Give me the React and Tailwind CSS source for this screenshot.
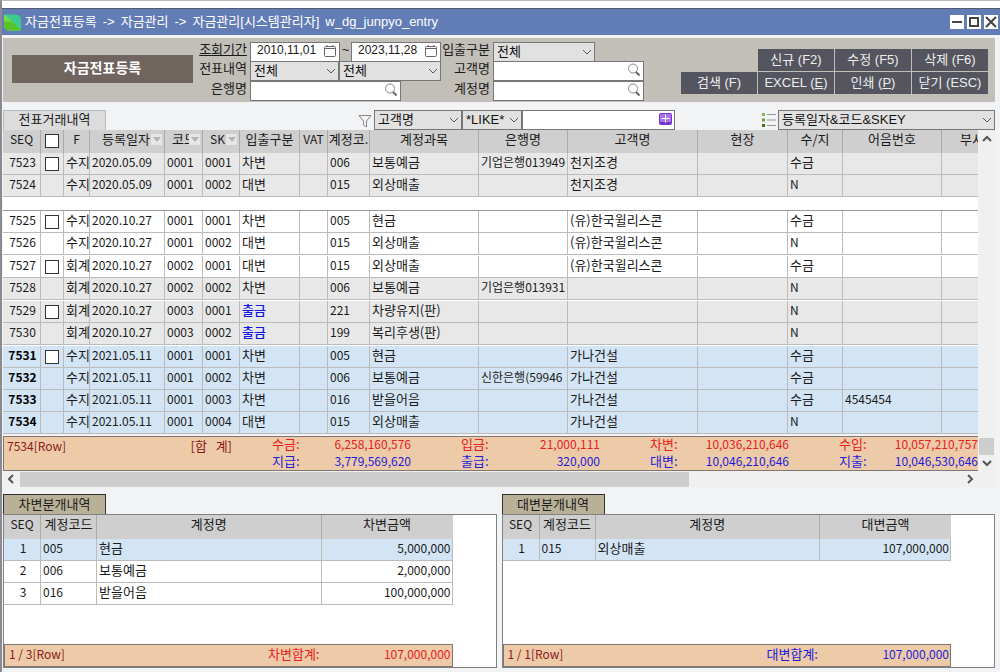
import { useState } from "react";

const columns = [
    { title: "SEQ", width: "w-[38px]" },
    { title: "", width: "w-[23px]", check: true },
    { title: "F", width: "w-[26px]" },
    { title: "등록일자", width: "w-[75px]", sort: "pl-3" },
    { title: "코드", width: "w-[38px]", sort: "pl-[7px]" },
    { title: "SKEY", width: "w-[37px]", sort: "pl-[7px] text-[12px]" },
    { title: "입출구분", width: "w-[60px]" },
    { title: "VAT", width: "w-[28px]" },
    { title: "계정코.", width: "w-[42px]" },
    { title: "계정과목", width: "w-[109px]" },
    { title: "은행명", width: "w-[89px]" },
    { title: "고객명", width: "w-[130px]" },
    { title: "현장", width: "w-[90px]" },
    { title: "수/지", width: "w-[55px]" },
    { title: "어음번호", width: "w-[99px]" },
    { title: "부서", width: "w-auto", last: true },
];

const groups = [
    {
        tone: "bg-[#e8e8e8]",
        rows: [
            ["7523", true, "수지", "2020.05.09", "0001", "0001", "차변", "006", "보통예금", "기업은행013949", "천지조경", "수금", ""],
            ["7524", false, "수지", "2020.05.09", "0001", "0002", "대변", "015", "외상매출", "", "천지조경", "N", ""],
        ],
    },
    {
        tone: "bg-white",
        rows: [
            ["7525", true, "수지", "2020.10.27", "0001", "0001", "차변", "005", "현금", "", "(유)한국윌리스콘", "수금", ""],
            ["7526", false, "수지", "2020.10.27", "0001", "0002", "대변", "015", "외상매출", "", "(유)한국윌리스콘", "N", ""],
        ],
    },
    {
        tone: "bg-white",
        rows: [
            ["7527", true, "회계", "2020.10.27", "0002", "0001", "대변", "015", "외상매출", "", "(유)한국윌리스콘", "수금", ""],
            ["7528", false, "회계", "2020.10.27", "0002", "0002", "차변", "006", "보통예금", "기업은행013931", "", "N", "", "bg-[#e8e8e8]"],
        ],
    },
    {
        tone: "bg-[#e8e8e8]",
        rows: [
            ["7529", true, "회계", "2020.10.27", "0003", "0001", "출금", "221", "차량유지(판)", "", "", "N", ""],
            ["7530", false, "회계", "2020.10.27", "0003", "0002", "출금", "199", "복리후생(판)", "", "", "N", ""],
        ],
    },
    {
        tone: "bg-[#d3e5f5]",
        selected: true,
        rows: [
            ["7531", true, "수지", "2021.05.11", "0001", "0001", "차변", "005", "현금", "", "가나건설", "수금", ""],
            ["7532", false, "수지", "2021.05.11", "0001", "0002", "차변", "006", "보통예금", "신한은행(59946", "가나건설", "수금", ""],
            ["7533", false, "수지", "2021.05.11", "0001", "0003", "차변", "016", "받을어음", "", "가나건설", "수금", "4545454"],
            ["7534", false, "수지", "2021.05.11", "0001", "0004", "대변", "015", "외상매출", "", "가나건설", "N", ""],
        ],
    },
];

const totals = [
    ["수금:", "6,258,160,576", "지급:", "3,779,569,620"],
    ["입금:", "21,000,111", "출급:", "320,000"],
    ["차변:", "10,036,210,646", "대변:", "10,046,210,646"],
    ["수입:", "10,057,210,757", "지출:", "10,046,530,646"],
];

const Chevron = ({ dir, className }) => {
    const d = {
        down: "M1 3l4 4 4-4",
        up: "M1 7l4-4 4 4",
        left: "M7 1L3 5l4 4",
        right: "M3 1l4 4-4 4",
    };
    return (
        <svg viewBox="0 0 10 10" fill="none" stroke="currentColor" className={className}>
            <path d={d[dir]} />
        </svg>
    );
};

const Search = () => (
    <svg viewBox="0 0 14 14" fill="none" className="absolute right-[3px] top-[2px] size-[14px]">
        <circle cx="6" cy="5.5" r="4.5" stroke="#888" />
        <path d="M9 9l3.5 3.5" stroke="#666" strokeWidth="2" />
    </svg>
);

const Calendar = () => (
    <svg viewBox="0 0 12 12" fill="none" stroke="#666" className="absolute right-1 top-[3px] size-[12px]">
        <rect x="0.5" y="1.5" width="11" height="10" rx="1" />
        <path d="M0.5 3.5h11M3 0v2M9 0v2" />
    </svg>
);

const Select = ({ label, value, className }) => (
    <div className={`relative h-5 ${className}`}>
        <select
            aria-label={label}
            className="block h-full w-full appearance-none border border-[#777] bg-[#e1e1e1] pl-[3px] leading-[18px] text-[#111]"
        >
            <option>{value}</option>
        </select>
        <Chevron dir="down" className="pointer-events-none absolute right-[3px] top-[5px] size-[10px] text-[#555]" />
    </div>
);

const SearchBox = ({ id }) => (
    <div className="relative h-5 w-[151px]">
        <input id={id} className="block h-full w-full border border-[#777] bg-white px-1" />
        <Search />
    </div>
);

const DateBox = ({ id, label, value }) => (
    <div className="relative h-5 w-[90px]">
        <input
            id={id}
            aria-label={label}
            defaultValue={value}
            className="block h-full w-full border border-[#777] bg-white pb-1 pl-[6px] text-[12px]"
        />
        <Calendar />
    </div>
);

const Check = ({ label }) => (
    <input
        type="checkbox"
        aria-label={label}
        className="mx-auto mt-1 block size-[14px] appearance-none border border-[#333] bg-white checked:bg-[#555]"
    />
);

const Tool = ({ children, className }) => (
    <button type="button" className={`h-[22px] bg-[#54555f] text-center leading-[22px] text-[#eee] ${className}`}>
        {children}
    </button>
);

const TitleBar = () => (
    <header className="flex h-[27px] items-center border-t border-[#555a70] bg-[#627cb6] pl-[2px] pr-[2px] text-white">
        <svg viewBox="0 0 17 16" className="mr-1 size-[17px]">
            <path d="M0 0h11q6 0 6 6v10H6q-6 0-6-6z" fill="#3fc98c" />
            <path d="M0 0l17 16H6q-6 0-6-6z" fill="#7ade3c" />
            <path d="M0 7q7-1 10 2l7 7H6q-6 0-6-6z" fill="#56c426" />
        </svg>
        <h1 className="flex gap-[6px]">
            <span>자금전표등록</span>
            <span>-&gt;</span>
            <span>자금관리</span>
            <span>-&gt;</span>
            <span>자금관리[시스템관리자]</span>
            <span>w_dg_junpyo_entry</span>
        </h1>
        <div className="ml-auto flex gap-[3px]">
            {[
                ["최소화", "M2 7h10"],
                ["최대화", "M3 3h8v8H3z"],
                ["닫기", "M2 2l10 10M12 2L2 12"],
            ].map(([name, d]) => (
                <button key={name} type="button" aria-label={name} className="size-[14px] bg-white">
                    <svg viewBox="0 0 14 14" fill="none" stroke="#444" strokeWidth="2" className="size-[14px]">
                        <path d={d} />
                    </svg>
                </button>
            ))}
        </div>
    </header>
);

const SearchPanel = () => (
    <section className="mr-[5px] mt-[3px] flex h-16 bg-[#c2beb8] pl-[9px] pr-[7px]">
        <h2 className="mt-[17px] h-7 w-[181px] bg-[#70645f] text-center text-[14px] font-bold leading-[26px] text-white">
            자금전표등록
        </h2>
        <div className="mt-1 grid h-[58px] grid-cols-[54px_auto] grid-rows-3 gap-x-[3px]">
            <label htmlFor="from" className="text-right leading-4 underline">조회기간</label>
            <div className="flex">
                <DateBox id="from" label="시작일" value="2010,11,01" />
                <span className="w-[11px] text-center leading-4">~</span>
                <DateBox id="to" label="종료일" value="2023,11,28" />
            </div>
            <span className="text-right leading-4">전표내역</span>
            <div className="flex">
                <Select label="전표내역" value="전체" className="w-[89px]" />
                <Select label="전표내역 상세" value="전체" className="w-[102px]" />
            </div>
            <label htmlFor="bank" className="text-right leading-4">은행명</label>
            <SearchBox id="bank" />
        </div>
        <div className="mt-1 grid h-[58px] grid-cols-[49px_auto] grid-rows-3 gap-x-[3px]">
            <span className="text-right leading-4">입출구분</span>
            <Select label="입출구분" value="전체" className="w-[102px]" />
            <label htmlFor="customer" className="text-right leading-4">고객명</label>
            <SearchBox id="customer" />
            <label htmlFor="account" className="text-right leading-4">계정명</label>
            <SearchBox id="account" />
        </div>
        <div className="ml-auto mt-[11px] grid h-[45px] grid-cols-[76px_76px_76px_76px] gap-px">
            <Tool className="col-start-2">신규 (F2)</Tool>
            <Tool>수정 (F5)</Tool>
            <Tool>삭제 (F6)</Tool>
            <Tool className="col-start-1">검색 (F)</Tool>
            <Tool>EXCEL (<u>E</u>)</Tool>
            <Tool>인쇄 (<u>P</u>)</Tool>
            <Tool>닫기 (ESC)</Tool>
        </div>
    </section>
);

const FilterRow = () => {
    const [keyword, setKeyword] = useState("");

    return (
        <div className="mr-[5px] mt-2 flex h-5">
            <div className="w-[103px] border border-b-0 border-[#b8bdc1] bg-[#dcdcdc] text-center leading-[18px]">전표거래내역</div>
            <svg viewBox="0 0 14 14" fill="none" stroke="#888" className="ml-[252px] mt-1 size-[14px]">
                <path d="M1 1.500h12L8.500 7v6L5.500 11V7z" />
            </svg>
            <Select label="검색 항목" value="고객명" className="ml-[2px] w-[88px]" />
            <Select label="검색 조건" value="*LIKE*" className="w-[60px]" />
            <div className="relative w-[153px]">
                <input
                    aria-label="검색어"
                    value={keyword}
                    onChange={(e) => setKeyword(e.target.value)}
                    className="block h-full w-full border border-[#777] bg-white px-1"
                />
                <svg viewBox="0 0 13 12" className="absolute right-[3px] top-[3px] h-3 w-[13px]">
                    <rect width="13" height="12" rx="2" fill="#7a35cf" />
                    <rect x="1" y="1" width="11" height="8" rx="1" fill="#a673ea" />
                    <path d="M6.500 1.500v8M2.500 5.500h8" stroke="#fff" />
                </svg>
            </div>
            <svg viewBox="0 0 15 14" className="ml-auto mr-[2px] mt-[3px] h-[14px] w-[15px]">
                <path d="M1 0h3v3H1z" fill="#8fb35c" />
                <path d="M1 5.500h3v3H1z" fill="#6c9c3c" />
                <path d="M1 11h3v3H1z" fill="#3f701c" />
                <path d="M6 1.500h9M6 7h9M6 12.500h9" stroke="#999" />
            </svg>
            <Select label="정렬" value="등록일자&코드&SKEY" className="w-[217px]" />
        </div>
    );
};

const cell = "overflow-hidden whitespace-nowrap border-b border-r border-[#bbb] p-0 pl-[2px] align-top leading-[18px]";
const numCell = `${cell} text-[12px]`;

const SlipRow = ({ row, tone, selected }) => {
    const [seq, check, kind, date, code, skey, side, acct, acctName, bank, customer, type, bill, ownTone] = row;

    return (
        <tr className={`h-[22px] ${ownTone || tone}`}>
            <td className={selected ? `${numCell} text-center font-bold text-black` : `${numCell} text-center`}>{seq}</td>
            <td className="border-b border-r border-[#bbb] p-0 align-top">{check && <Check label={`${seq} 선택`} />}</td>
            <td className={cell}>{kind}</td>
            <td className={numCell}>{date}</td>
            <td className={numCell}>{code}</td>
            <td className={numCell}>{skey}</td>
            <td className={side === "출금" ? `${cell} font-medium text-[#1515e0]` : cell}>{side}</td>
            <td className={cell}></td>
            <td className={numCell}>{acct}</td>
            <td className={cell}>{acctName}</td>
            <td className={numCell}>{bank}</td>
            <td className={cell}>{customer}</td>
            <td className={cell}></td>
            <td className={type === "N" ? numCell : cell}>{type}</td>
            <td className={numCell}>{bill}</td>
            <td className="border-b border-[#bbb]"></td>
        </tr>
    );
};

const SlipTable = () => (
    <table className="w-full table-fixed border-separate border-spacing-0 bg-white">
        <thead>
            <tr className="h-[23px] bg-[#cfcfcf]">
                {columns.map((col) => (
                    <th
                        key={col.title}
                        className={`${col.width} overflow-hidden whitespace-nowrap border-r border-[#aaa] p-0 align-top font-normal leading-[18px] ${col.last ? "border-r-0 pl-[18px] text-left" : ""}`}
                    >
                        {col.check && <Check label="전체 선택" />}
                        {col.sort ? (
                            <div className={`flex ${col.sort}`}>
                                <span className="min-w-0 flex-1 overflow-hidden text-left">{col.title}</span>
                                <button type="button" aria-label={`${col.title} 정렬`} className="mr-[2px] mt-1 flex size-[11px] shrink-0 items-center justify-center bg-[#e6e6e6]">
                                    <svg viewBox="0 0 8 5" className="h-[5px] w-2">
                                        <path d="M0 0h8L4 5z" fill="#b5b5b5" />
                                    </svg>
                                </button>
                            </div>
                        ) : (
                            <span className={/[A-Z]/.test(col.title) ? "text-[12px]" : ""}>{col.title}</span>
                        )}
                    </th>
                ))}
            </tr>
        </thead>
        {groups.map((group, i) => (
            <tbody key={i}>
                {i > 0 && (
                    <tr className={i === 1 ? "h-[14px]" : "h-px"}>
                        <td colSpan={16} className={i === 1 ? "border-b border-[#999] p-0" : "p-0"}></td>
                    </tr>
                )}
                {group.rows.map((row) => (
                    <SlipRow key={row[0]} row={row} tone={group.tone} selected={group.selected} />
                ))}
            </tbody>
        ))}
    </table>
);

const SlipTotals = () => (
    <div className="mt-[2px] grid h-[35px] grid-cols-[268px_189px_189px_189px_1fr] border-y border-l border-[#807870] bg-[#edcaa8]">
        <div className="flex justify-between pl-[3px] pr-10 leading-[17px] text-[#8b1a1a]">
            <span className="text-[12px]">7534[Row]</span>
            <span className="whitespace-pre">[합   계]</span>
        </div>
        {totals.map(([inLabel, inValue, outLabel, outValue], i) => (
            <dl key={inLabel} className={i < 3 ? "pr-[50px]" : ""}>
                <div className="flex h-[17px] justify-between leading-[14px] text-[#e8201c]">
                    <dt>{inLabel}</dt>
                    <dd className="text-[12px]">{inValue}</dd>
                </div>
                <div className="flex h-4 justify-between leading-[14px] text-[#1c1cd8]">
                    <dt>{outLabel}</dt>
                    <dd className="text-[12px]">{outValue}</dd>
                </div>
            </dl>
        ))}
    </div>
);

const Ledger = ({ tab, amountTitle, rows, position, sumLabel, sum, sumColor }) => (
    <section className="flex min-w-0 flex-1 flex-col">
        <h2 className="h-5 w-[103px] border border-b-0 border-[#333] bg-[#b9b197] text-center leading-[18px]">{tab}</h2>
        <div className="flex h-[154px] flex-col border border-[#808080] bg-white">
            <div className="flex flex-1 flex-col pr-[43px]">
                <table className="w-full table-fixed border-separate border-spacing-0">
                    <thead>
                        <tr className="h-6 bg-[#cfcfcf]">
                            <th className="w-[37px] border-r border-[#aaa] p-0 align-top text-[12px] font-normal leading-[18px]">SEQ</th>
                            <th className="w-[56px] border-r border-[#aaa] p-0 align-top font-normal leading-[18px]">계정코드</th>
                            <th className="border-r border-[#aaa] p-0 align-top font-normal leading-[18px]">계정명</th>
                            <th className="w-[131px] p-0 align-top font-normal leading-[18px]">{amountTitle}</th>
                        </tr>
                    </thead>
                    <tbody>
                        {rows.map(([code, name, amount], i) => (
                            <tr key={code} className={i === 0 ? "h-[22px] bg-[#d3e5f5]" : "h-[22px]"}>
                                <td className={`${numCell} text-center`}>{i + 1}</td>
                                <td className={numCell}>{code}</td>
                                <td className={cell}>{name}</td>
                                <td className={`${numCell} pr-px text-right`}>{amount}</td>
                            </tr>
                        ))}
                    </tbody>
                </table>
                <div className="mt-auto flex h-[23px] border border-[#807870] bg-[#edcaa8] pl-1 pr-px leading-[18px]">
                    <span className="text-[12px] text-[#8b1a1a]">{position}</span>
                    <span className={`ml-auto ${sumColor}`}>{sumLabel}</span>
                    <span className={`w-[131px] text-right text-[12px] ${sumColor}`}>{sum}</span>
                </div>
            </div>
        </div>
    </section>
);

const App = () => {
    return (
        <div className="min-h-screen border-l-2 border-t border-[#8a8a90] border-t-[#bbb] bg-[#f2f3f5] font-['Liberation_Sans','Noto_Sans_CJK_KR',sans-serif] text-[13px] text-[#1a1a1a]">
            <div className="h-[7px] bg-white"></div>
            <TitleBar />
            <main className="pl-px">
                <SearchPanel />
                <FilterRow />
                <div className="mr-[5px] flex font-['Noto_Sans_CJK_KR',sans-serif]">
                    <div className="min-w-0 flex-1">
                        <SlipTable />
                        <SlipTotals />
                    </div>
                    <div className="flex w-[17px] flex-col items-center bg-[#f0f0f0]">
                        <Chevron dir="up" className="mt-1 size-[10px] stroke-2 text-[#555]" />
                        <div className="mt-auto h-[17px] w-[15px] bg-[#cdcdcd]"></div>
                        <Chevron dir="down" className="my-[3px] size-[10px] stroke-2 text-[#555]" />
                    </div>
                </div>
                <div className="mr-[5px] flex h-4 items-center bg-[#f0f0f0] pl-[3px] pr-5">
                    <Chevron dir="left" className="mr-1 size-[10px] stroke-2 text-[#555]" />
                    <div className="h-[15px] w-[69%] bg-[#cdcdcd]"></div>
                    <Chevron dir="right" className="ml-auto size-[10px] stroke-2 text-[#555]" />
                </div>
                <div className="mr-[5px] mt-[7px] flex gap-[5px] font-['Noto_Sans_CJK_KR',sans-serif]">
                    <Ledger
                        tab="차변분개내역"
                        amountTitle="차변금액"
                        rows={[
                            ["005", "현금", "5,000,000"],
                            ["006", "보통예금", "2,000,000"],
                            ["016", "받을어음", "100,000,000"],
                        ]}
                        position="1 / 3[Row]"
                        sumLabel="차변합계:"
                        sum="107,000,000"
                        sumColor="text-[#e8201c]"
                    />
                    <Ledger
                        tab="대변분개내역"
                        amountTitle="대변금액"
                        rows={[["015", "외상매출", "107,000,000"]]}
                        position="1 / 1[Row]"
                        sumLabel="대변합계:"
                        sum="107,000,000"
                        sumColor="text-[#1c1cd8]"
                    />
                </div>
            </main>
        </div>
    );
};

export default App;
